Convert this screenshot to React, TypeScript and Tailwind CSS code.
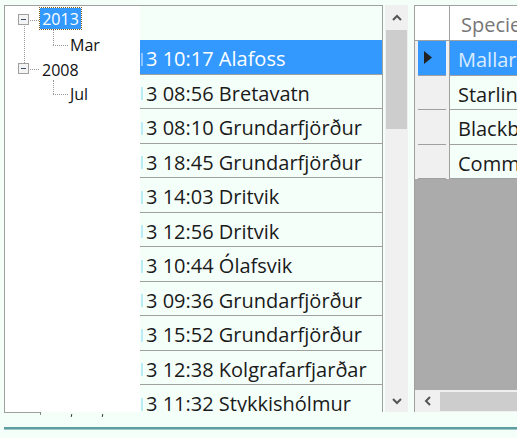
import React from "react"

const rows = [
  "",
  "3 10:17 Alafoss",
  "3 08:56 Bretavatn",
  "3 08:10 Grundarfjörður",
  "3 18:45 Grundarfjörður",
  "3 14:03 Dritvik",
  "3 12:56 Dritvik",
  "3 10:44 Ólafsvik",
  "3 09:36 Grundarfjörður",
  "3 15:52 Grundarfjörður",
  "3 12:38 Kolgrafarfjarðar",
  "3 11:32 Stykkishólmur",
]

const species = ["Mallard", "Starling", "Blackbird", "Common Eider"]

function Expander() {
  return (
    <div className="w-[11px] h-[11px] border border-[#a0a0a0] bg-[#f4f4f4] flex items-center justify-center">
      <div className="w-[5px] h-px bg-[#3c4a6a]" />
    </div>
  )
}

function Tree() {
  return (
    <div className="relative w-[136px] h-[407px] bg-white border-l border-t border-[#a0a0a0] shrink-0 text-[16px] text-[#111]">
      {/* 2013 */}
      <div className="absolute left-[13px] top-[8px]">
        <Expander />
      </div>
      <div className="absolute left-[25px] top-[14px] w-[9px] border-t border-dotted border-[#999]" />
      <div className="absolute left-[35px] top-[2px] w-[41px] h-[21px] bg-[#3399ff] text-white outline outline-1 outline-dotted outline-[#8a5a1a] flex items-center justify-center leading-none">
        2013
      </div>
      {/* line from 2013 to 2008 */}
      <div className="absolute left-[19px] top-[20px] h-[37px] border-l border-dotted border-[#999]" />
      {/* Mar */}
      <div className="absolute left-[48px] top-[24px] h-[15px] border-l border-dotted border-[#999]" />
      <div className="absolute left-[48px] top-[39px] w-[15px] border-t border-dotted border-[#999]" />
      <div className="absolute left-[65px] top-[31px] leading-none">Mar</div>
      {/* 2008 */}
      <div className="absolute left-[13px] top-[57px]">
        <Expander />
      </div>
      <div className="absolute left-[25px] top-[63px] w-[9px] border-t border-dotted border-[#999]" />
      <div className="absolute left-[37px] top-[56px] leading-none">2008</div>
      {/* Jul */}
      <div className="absolute left-[48px] top-[74px] h-[14px] border-l border-dotted border-[#999]" />
      <div className="absolute left-[48px] top-[88px] w-[15px] border-t border-dotted border-[#999]" />
      <div className="absolute left-[65px] top-[80px] leading-none">Jul</div>
      {/* bottom remnants */}
      <div className="absolute left-[-1px] bottom-[-1px] w-[37px] h-px bg-[#a0a0a0]" />
      <div className="absolute left-[35px] bottom-[-3px] w-px h-[3px] bg-[#888]" />
      <div className="absolute left-[66px] bottom-[-5px] w-px h-[3px] bg-[#333] rotate-12" />
      <div className="absolute left-[97px] bottom-[-5px] w-px h-[3px] bg-[#333] rotate-12" />
    </div>
  )
}

function ListBox() {
  return (
    <div className="w-[243px] h-[407px] border-t border-r border-[#a0a0a0] overflow-hidden shrink-0 bg-[#f5fffa]">
      {rows.map((r, i) => (
        <div
          key={i}
          className={
            (i === 0 ? "h-[34px] " : "h-[34.5px] border-b border-[#a0a0a0] ") +
            (i === 1 ? "bg-[#3399ff] text-white " : "text-[#1a1a1a] ") +
            "flex items-center pt-[5px] text-[20px] whitespace-nowrap"
          }
        >
          {r && (
            <>
              <span className={"ml-px w-[2px] h-[13px] " + (i === 1 ? "bg-[#8cc4ff]" : "bg-[#b9ecf5]")} />
              <span className="ml-[3px]">{r}</span>
            </>
          )}
        </div>
      ))}
    </div>
  )
}

function VScroll() {
  return (
    <div className="ml-[2px] w-[23px] h-[407px] bg-[#f0f0f0] flex flex-col items-center shrink-0">
      <div className="h-[25px] flex items-center justify-center">
        <svg width="10" height="7" viewBox="0 0 10 7">
          <path d="M1 6 L5 2 L9 6" fill="none" stroke="#555" strokeWidth="2" />
        </svg>
      </div>
      <div className="w-[21px] h-[99px] bg-[#cdcdcd]" />
      <div className="flex-1" />
      <div className="h-[20px] pb-[2px] flex items-center justify-center">
        <svg width="10" height="7" viewBox="0 0 10 7">
          <path d="M1 1 L5 5 L9 1" fill="none" stroke="#555" strokeWidth="2" />
        </svg>
      </div>
    </div>
  )
}

function Grid() {
  return (
    <div className="ml-[6px] flex-1 h-[407px] border-l border-t border-[#a0a0a0] flex flex-col overflow-hidden bg-[#ababab]">
      <div className="flex h-[35px] bg-white border-b border-[#a0a0a0] shrink-0">
        <div className="w-[35px] border-r border-[#a0a0a0] shrink-0" />
        <div className="pl-[11px] pt-[4px] flex items-center text-[20px] text-[#777] whitespace-nowrap">Species</div>
      </div>
      {species.map((s, i) => (
        <div key={s} className="flex h-[34.5px] shrink-0">
          <div className="w-[35px] bg-[#f0f0f0] border-r border-[#a0a0a0] shrink-0 px-[3px] flex flex-col">
            <div className={"flex-1 flex items-center pl-[6px] " + (i === 0 ? "bg-[#3399ff]" : "")}>
              {i === 0 && (
                <svg width="8" height="13" viewBox="0 0 8 13">
                  <path d="M0 0 L8 6.5 L0 13 Z" fill="#222" />
                </svg>
              )}
            </div>
            <div className="h-px bg-[#a0a0a0]" />
          </div>
          <div
            className={
              "flex-1 pl-[8px] pt-[5px] flex items-center text-[20px] whitespace-nowrap border-b border-[#a0a0a0] " +
              (i === 0 ? "bg-[#3399ff] text-[#dcecff]" : "bg-[#f5fffa] text-[#1a1a1a]")
            }
          >
            {s}
          </div>
        </div>
      ))}
      <div className="flex-1" />
      <div className="h-[22px] bg-[#f0f0f0] flex items-center shrink-0">
        <div className="w-[25px] flex items-center justify-center">
          <svg width="7" height="10" viewBox="0 0 7 10">
            <path d="M6 1 L2 5 L6 9" fill="none" stroke="#555" strokeWidth="2" />
          </svg>
        </div>
        <div className="flex-1 h-[19px] bg-[#cdcdcd]" />
      </div>
    </div>
  )
}

export default function App() {
  return (
    <div
      className="w-[517px] h-[438px] bg-[#f5fffa] overflow-hidden"
      style={{ fontFamily: "'Open Sans', 'Noto Sans', sans-serif" }}
    >
      <div className="pt-[5px] pl-[4px] flex">
        <Tree />
        <ListBox />
        <VScroll />
        <Grid />
      </div>
      <div className="ml-[4px] mt-[15px] h-[3px] bg-[#5f9ea0] border-b border-[#9fc9c9]" />
    </div>
  )
}
